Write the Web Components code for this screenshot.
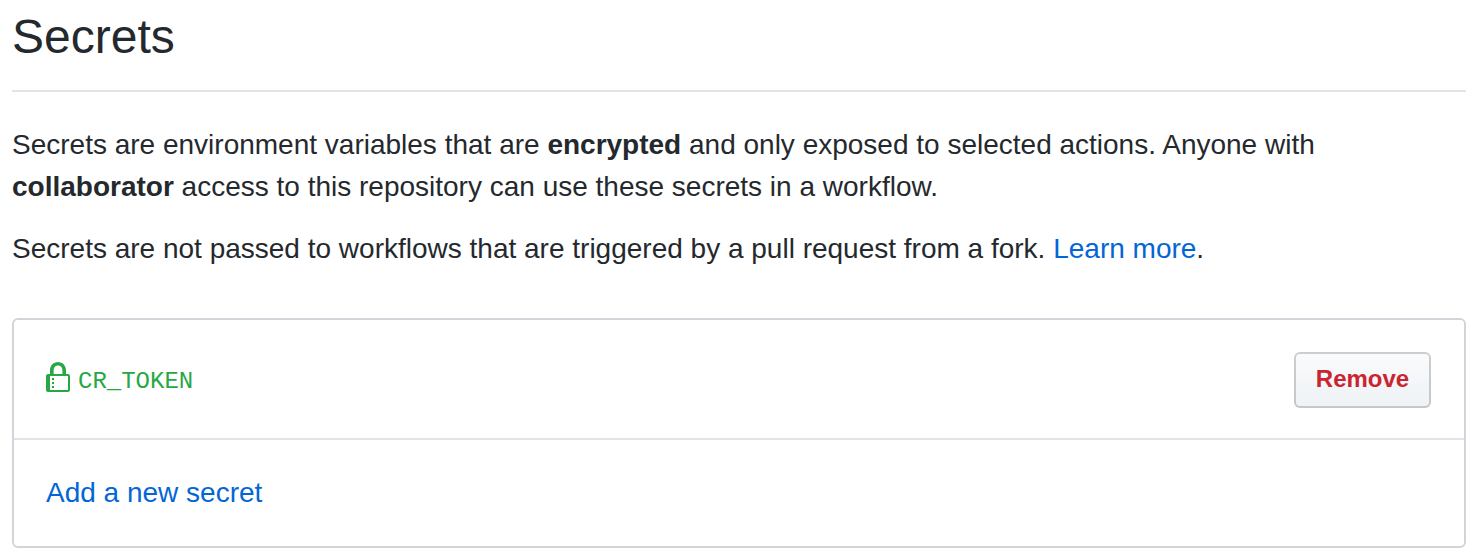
<!DOCTYPE html>
<html lang="en"><head><meta charset="utf-8"><title>Secrets</title>
<style>body{margin:0;background:#fff;color:#24292e;font:28px/42px "Liberation Sans",Arial,sans-serif}</style></head>
<body>
<secrets-page>
<page-heading>Secrets</page-heading>
<note-text>Secrets are environment variables that are <b>encrypted</b> and only exposed to selected actions. Anyone with<br><b>collaborator</b> access to this repository can use these secrets in a workflow.</note-text>
<note-text>Secrets are not passed to workflows that are triggered by a pull request from a fork. <text-link>Learn more</text-link>.</note-text>
<secret-box><secret-row>CR_TOKEN</secret-row><text-link slot="footer">Add a new secret</text-link></secret-box>
</secrets-page>
<script>
const define=(name,html)=>customElements.define(name,class extends HTMLElement{
constructor(){super();this.attachShadow({mode:'open'}).innerHTML=html;}});
define('text-link','<style>:host{display:inline;color:#0366d6;cursor:pointer}</style><slot></slot>');
define('page-heading','<style>:host{display:block;box-sizing:border-box;height:92px;padding-top:1px;border-bottom:2px solid #e1e4e8;margin-bottom:32px}h1{margin:0;font-size:48px;line-height:72px;font-weight:400}</style><h1><slot></slot></h1>');
define('note-text','<style>:host{display:block;margin-bottom:20px;white-space:nowrap}</style><slot></slot>');
define('lock-icon','<style>:host{display:block;width:24px;height:32px}svg{display:block}</style><svg width="24" height="32" viewBox="0 0 12 16" fill="currentColor" fill-rule="evenodd"><path d="M4 13H3v-1h1v1zm8-6v7c0 .55-.45 1-1 1H1c-.55 0-1-.45-1-1V7c0-.55.45-1 1-1h1V4c0-2.2 1.8-4 4-4s4 1.8 4 4v2h1c.55 0 1 .45 1 1zM3.8 6h4.41V4c0-1.22-.98-2.2-2.2-2.2-1.22 0-2.2.98-2.2 2.2v2H3.8zM11 7H2v7h9V7zM4 8H3v1h1V8zm0 2H3v1h1v-1z"/></svg>');
define('danger-button','<style>:host{display:block}button{display:block;box-sizing:border-box;width:137px;height:56px;padding:0 0 2px;border:2px solid rgba(27,31,35,.2);border-radius:6px;background:linear-gradient(-180deg,#fafbfc,#eff3f6 90%) border-box;background-origin:border-box;color:#cb2431;font:bold 24px/36px "Liberation Sans",Arial,sans-serif}</style><button><slot></slot></button>');
define('secret-row','<style>:host{display:flex;align-items:center;justify-content:space-between;box-sizing:border-box;height:120px;padding:2px 33px 0 32px;border-bottom:2px solid #e1e4e8}.name{display:flex;align-items:center;gap:8px;color:#28a745}code{padding-top:4px;font:24px/36px "Liberation Mono",monospace}lock-icon{margin-top:-4px}</style><div class="name"><lock-icon></lock-icon><code><slot></slot></code></div><danger-button>Remove</danger-button>');
define('secret-box','<style>:host{display:block;box-sizing:border-box;height:230px;margin-top:28px;border:2px solid #d1d5da;border-radius:6px}.footer{padding:32px}</style><slot></slot><div class="footer"><slot name="footer"></slot></div>');
define('secrets-page','<style>:host{display:flex;flex-direction:column;box-sizing:border-box;width:1480px;height:560px;padding:0 14px 12px 12px;overflow:hidden}</style><slot></slot>');
</script></body></html>
